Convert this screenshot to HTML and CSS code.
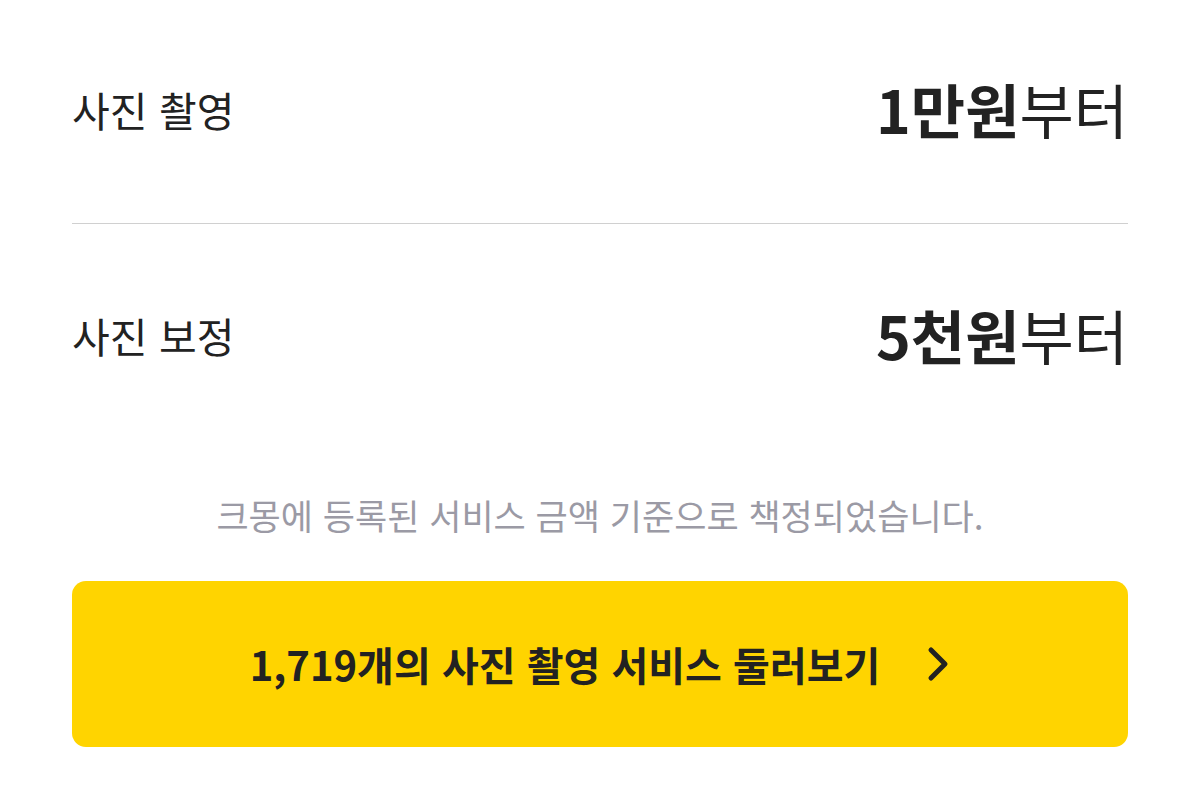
FILE: index.html
```html
<!DOCTYPE html>
<html lang="ko">
<head>
    <meta charset="utf-8">
    <title>가격 안내</title>
    <link rel="stylesheet" href="styles.css">
</head>
<body>
    <div class="price-box">
        <div class="price-row">
            <span class="label">사진 촬영</span>
            <span class="price"><b>1만원</b>부터</span>
        </div>
        <div class="price-row">
            <span class="label">사진 보정</span>
            <span class="price"><b>5천원</b>부터</span>
        </div>
        <p class="notice">크몽에 등록된 서비스 금액 기준으로 책정되었습니다.</p>
        <a class="more-btn" href="#">
            <span>1,719개의 사진 촬영 서비스 둘러보기</span>
            <svg class="chevron" width="24" height="36" viewBox="0 0 24 36">
                <polyline points="5,4 19,18 5,32" fill="none" stroke="#222" stroke-width="5" stroke-linecap="round" stroke-linejoin="round"/>
            </svg>
        </a>
    </div>
</body>
</html>
```

FILE: styles.css
```css
* {
    margin: 0;
    padding: 0;
    box-sizing: border-box;
}
body {
    background: #fff;
    font-family: "Noto Sans CJK KR", "Noto Sans", sans-serif;
    color: #222;
}
.price-box {
    padding: 0 72px;
}
.price-row {
    display: flex;
    align-items: center;
    justify-content: space-between;
    height: 223px;
    padding-bottom: 6px;
}
.price-row + .price-row {
    border-top: 1px solid #d0d0d0;
    height: 228px;
}
.label {
    font-size: 41px;
}
.price {
    font-size: 59px;
}
.price b {
    font-weight: 700;
}
.notice {
    margin-top: 39px;
    text-align: center;
    font-size: 35px;
    line-height: 50px;
    color: #9b9aa5;
}
.more-btn {
    display: flex;
    align-items: center;
    justify-content: center;
    gap: 46px;
    margin-top: 41px;
    height: 166px;
    border-radius: 14px;
    background: #ffd400;
    color: #222;
    font-size: 40px;
    font-weight: 700;
    text-decoration: none;
}
.chevron {
    display: block;
}
```
